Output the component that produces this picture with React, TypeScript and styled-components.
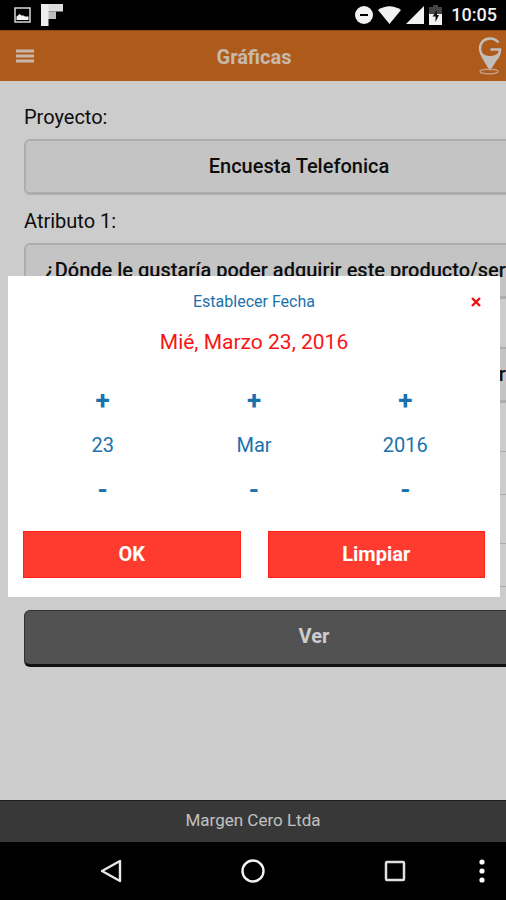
import React, { useState } from 'react';
import styled, { createGlobalStyle } from 'styled-components';

const GlobalStyle = createGlobalStyle`
  *, *::before, *::after { box-sizing: border-box; }
  body { margin: 0; background: #000; }
  body, button, input, select { font-family: Roboto, "Liberation Sans", sans-serif; }
  button { cursor: pointer; }
`;

const Screen = styled.div`
  display: flex;
  flex-direction: column;
  min-height: 100vh;
  background: #000;
  overflow: hidden;
`;

const StatusBar = styled.div`
  display: flex;
  align-items: center;
  justify-content: space-between;
  height: 30px;
  padding: 0 9px 0 14px;
  color: #f0f0f0;
`;

const StatusGroup = styled.div<{ $gap: number }>`
  display: flex;
  align-items: center;
  gap: ${({ $gap }) => $gap}px;
`;

const Clock = styled.time`
  margin-left: 4px;
  font-size: 18px;
  line-height: 30px;
  font-weight: 500;
`;

const AppArea = styled.div`
  position: relative;
  flex: 1;
  display: flex;
  flex-direction: column;
  overflow: hidden;
  background: #fff;
`;

const Header = styled.header`
  display: grid;
  grid-template-columns: 1fr auto 1fr;
  align-items: center;
  height: 51px;
  padding: 0 4px 0 16px;
  border-top: 1px solid #b8580f;
  background: #da7122;
`;

const MenuButton = styled.button`
  justify-self: start;
  display: flex;
  padding: 0;
  border: 0;
  background: none;
`;

const Title = styled.h1`
  margin: 0 10px 0 0;
  padding-top: 2px;
  color: #fbe6d6;
  font-size: 20px;
  line-height: 28px;
  font-weight: 700;
`;

const Logo = styled.div`
  justify-self: end;
  display: flex;
`;

const Content = styled.main`
  flex: 1;
  padding: 10px 0 0 24px;
  overflow: hidden;
`;

const Form = styled.form`
  display: flex;
  flex-direction: column;
  margin-right: -98px;
`;

const Label = styled.label`
  padding-top: 4px;
  color: #111;
  font-size: 20px;
  line-height: 44px;
`;

const Select = styled.select`
  appearance: none;
  height: 56px;
  padding: 0 50px 2px 19px;
  border: 1px solid #d9d9d9;
  border-width: 2px 1px 3px 2px;
  border-radius: 6px;
  background: #f6f6f6;
  color: #111;
  font-size: 20px;
  font-weight: 500;
  text-align: center;
  text-align-last: center;
  text-overflow: ellipsis;
`;

const DateField = styled.input`
  height: 44px;
  padding: 0 12px;
  border: 1px solid #d9d2cc;
  border-radius: 6px;
  background: #fff;
  color: #111;
  font-size: 20px;
`;

const SubmitButton = styled.button`
  height: 57px;
  margin-top: 23px;
  padding: 0 0 3px;
  border: 1px solid #3c3c3c;
  border-bottom: 3px solid #141414;
  border-radius: 6px;
  background: #676767;
  color: #fff;
  font-size: 20px;
  font-weight: 700;
`;

const Footer = styled.footer`
  height: 42px;
  border-top: 1px solid #222;
  background: #464646;
  color: #f0f0f0;
  font-size: 17px;
  line-height: 38px;
  text-align: center;
`;

const Overlay = styled.div`
  position: absolute;
  inset: 0;
  display: flex;
  align-items: center;
  padding: 0 6px 0 8px;
  background: rgba(0, 0, 0, 0.2);
`;

const Dialog = styled.section`
  width: 100%;
  padding: 14px 15px 19px;
  background: #fff;
  color: #1a72ad;
`;

const DialogHeader = styled.div`
  display: grid;
  grid-template-columns: 1fr auto 1fr;
  align-items: center;
`;

const DialogTitle = styled.h2`
  grid-column: 2;
  margin: 0;
  font-size: 16px;
  line-height: 24px;
  font-weight: 400;
`;

const CloseButton = styled.button`
  justify-self: end;
  display: flex;
  margin-right: 4px;
  padding: 0;
  border: 0;
  background: none;
`;

const DateSummary = styled.p`
  margin: 12px 0 20px;
  color: #f81414;
  font-size: 21px;
  line-height: 32px;
  text-align: center;
`;

const Wheels = styled.div`
  display: grid;
  grid-template-columns: repeat(3, 1fr);
  padding: 0 4px;
`;

const Wheel = styled.div`
  display: flex;
  flex-direction: column;
  min-width: 0;
`;

const StepButton = styled.button`
  height: 45px;
  padding: 0;
  border: 0;
  background: none;
  color: #1a72ad;
  font-size: 26px;
  line-height: 45px;
  font-weight: 700;
`;

const WheelValue = styled.input`
  width: 100%;
  height: 45px;
  padding: 0;
  border: 0;
  background: none;
  color: #1a72ad;
  font-size: 20px;
  text-align: center;
`;

const Actions = styled.div`
  display: grid;
  grid-template-columns: 1fr 1fr;
  gap: 27px;
  margin-top: 18px;
`;

const ActionButton = styled.button`
  height: 47px;
  padding: 0;
  border: 1px solid #ff2018;
  background: #ff3b30;
  color: #fff;
  font-size: 20px;
  font-weight: 700;
`;

const SystemNav = styled.nav`
  display: grid;
  grid-template-columns: 40px 1fr 1fr 1fr 40px;
  align-items: center;
  height: 58px;
`;

const NavButton = styled.button`
  display: flex;
  justify-content: center;
  padding: 0;
  border: 0;
  background: none;
`;

const NavMore = styled(NavButton)`
  grid-column: 5;
  padding-right: 8px;
`;

const PictureIcon = () => (
  <svg width="17" height="16" viewBox="0 0 17 16" aria-hidden="true">
    <rect x="1" y="1" width="15" height="14" fill="none" stroke="#d8d8d8" strokeWidth="1.5" />
    <path d="M2.500 13V9.500L4.500 8l1-1 2 1.500h2L11 9.500h3.500V13z" fill="#f4f4f4" />
  </svg>
);

const FlipIcon = () => (
  <svg width="22" height="22" viewBox="0 0 22 22" aria-hidden="true">
    <path d="M0 0h22v7.500H0z" fill="#dcdcdc" />
    <path d="M7 7.500h8V15H7z" fill="#bdbdbd" />
    <path d="M0 0h7.500v22H0z" fill="#eee" />
  </svg>
);

const DoNotDisturbIcon = () => (
  <svg width="18" height="18" viewBox="0 0 18 18" aria-hidden="true">
    <circle cx="9" cy="9" r="9" fill="#f2f2f2" />
    <path d="M5 9h8" stroke="#000" strokeWidth="2" />
  </svg>
);

const WifiIcon = () => (
  <svg width="23" height="18" viewBox="0 0 23 18" aria-hidden="true">
    <path d="M0 4Q11.500-3.500 23 4L11.500 18z" fill="#f2f2f2" />
  </svg>
);

const SignalIcon = () => (
  <svg width="18" height="18" viewBox="0 0 18 18" aria-hidden="true">
    <path d="M18 0v18H0z" fill="#f2f2f2" />
  </svg>
);

const BatteryIcon = () => (
  <svg width="13" height="20" viewBox="0 0 13 20" aria-hidden="true">
    <path d="M4 0h5v2h4v7H0V2h4z" fill="#444" />
    <path d="M0 9h13v11H0z" fill="#f2f2f2" />
    <path d="M8 5 3.500 11.500h3V17L10 10H8z" fill="#111" />
  </svg>
);

const MenuIcon = () => (
  <svg width="18" height="14" viewBox="0 0 18 14" aria-hidden="true">
    <path d="M0 2h18M0 7h18M0 12h18" stroke="#fbe6d6" strokeWidth="3" />
  </svg>
);

const PinLogo = () => (
  <svg width="24" height="38" viewBox="0 0 24 38" role="img" aria-label="G">
    <path
      d="M20.500 5.500C18 2.500 15.500 1.500 12 1.500C6 1.500 2 6 2 11.500C2 15 4 18.500 6 22"
      fill="none"
      stroke="#f2eeec"
      strokeWidth="2.400"
    />
    <path d="M12.500 12.500H22C22 16 21 18.500 18.500 22" fill="none" stroke="#f2eeec" strokeWidth="2.400" />
    <path d="M2 14C6 18.500 9 19 12 19C15.500 19 19 18 22.500 14C21.500 20 17 26 12 34C7 26 3 20 2 14z" fill="#f2eeec" />
    <ellipse cx="11" cy="34.500" rx="9" ry="2.200" fill="none" stroke="#f0c8ae" strokeWidth="1.400" />
  </svg>
);

const CloseIcon = () => (
  <svg width="10" height="10" viewBox="0 0 10 10" aria-hidden="true">
    <path d="M1 1l8 8M9 1L1 9" stroke="#f01010" strokeWidth="2.400" />
  </svg>
);

const BackIcon = () => (
  <svg width="22" height="24" viewBox="0 0 22 24" aria-hidden="true">
    <path d="M20 2v20L2 12z" fill="none" stroke="#e8e8e8" strokeWidth="2.400" strokeLinejoin="round" />
  </svg>
);

const HomeIcon = () => (
  <svg width="24" height="24" viewBox="0 0 24 24" aria-hidden="true">
    <circle cx="12" cy="12" r="10.500" fill="none" stroke="#f4f4f4" strokeWidth="2.400" />
  </svg>
);

const RecentIcon = () => (
  <svg width="22" height="22" viewBox="0 0 22 22" aria-hidden="true">
    <rect x="2" y="2" width="18" height="18" rx="1" fill="none" stroke="#e0e0e0" strokeWidth="2.500" />
  </svg>
);

const MoreIcon = () => (
  <svg width="6" height="24" viewBox="0 0 6 24" aria-hidden="true">
    <circle cx="3" cy="3" r="2.600" fill="#fff" />
    <circle cx="3" cy="12" r="2.600" fill="#fff" />
    <circle cx="3" cy="21" r="2.600" fill="#fff" />
  </svg>
);

const MONTHS = ['Enero', 'Febrero', 'Marzo', 'Abril', 'Mayo', 'Junio', 'Julio', 'Agosto', 'Septiembre', 'Octubre', 'Noviembre', 'Diciembre'];
const DAYS = ['Dom', 'Lun', 'Mar', 'Mié', 'Jue', 'Vie', 'Sáb'];
const QUESTION = '¿Dónde le gustaría poder adquirir este producto/servicio?';

type Unit = 'day' | 'month' | 'year';

const shift = (date: Date, unit: Unit, by: number) => {
  const next = new Date(date);
  if (unit === 'day') next.setDate(next.getDate() + by);
  if (unit === 'month') next.setMonth(next.getMonth() + by);
  if (unit === 'year') next.setFullYear(next.getFullYear() + by);
  return next;
};

export default function App() {
  const [date, setDate] = useState(new Date(2016, 2, 23));
  const [open, setOpen] = useState(true);
  const close = () => setOpen(false);

  const wheels: { unit: Unit; name: string; value: string }[] = [
    { unit: 'day', name: 'Día', value: String(date.getDate()) },
    { unit: 'month', name: 'Mes', value: MONTHS[date.getMonth()].slice(0, 3) },
    { unit: 'year', name: 'Año', value: String(date.getFullYear()) },
  ];

  return (
    <>
      <GlobalStyle />
      <Screen>
        <StatusBar>
          <StatusGroup $gap={10}>
            <PictureIcon />
            <FlipIcon />
          </StatusGroup>
          <StatusGroup $gap={5}>
            <DoNotDisturbIcon />
            <WifiIcon />
            <SignalIcon />
            <BatteryIcon />
            <Clock>10:05</Clock>
          </StatusGroup>
        </StatusBar>

        <AppArea>
          <Header>
            <MenuButton type="button" aria-label="Menú"><MenuIcon /></MenuButton>
            <Title>Gráficas</Title>
            <Logo><PinLogo /></Logo>
          </Header>

          <Content>
            <Form onSubmit={(e) => e.preventDefault()}>
              <Label htmlFor="project">Proyecto:</Label>
              <Select id="project"><option>Encuesta Telefonica</option></Select>
              <Label htmlFor="attribute1">Atributo 1:</Label>
              <Select id="attribute1"><option>{QUESTION}</option></Select>
              <Label htmlFor="attribute2">Atributo 2:</Label>
              <Select id="attribute2"><option>{QUESTION}</option></Select>
              <Label htmlFor="from">Desde:</Label>
              <DateField id="from" readOnly onClick={() => setOpen(true)} />
              <Label htmlFor="to">Hasta:</Label>
              <DateField id="to" readOnly onClick={() => setOpen(true)} />
              <SubmitButton>Ver</SubmitButton>
            </Form>
          </Content>

          <Footer>Margen Cero Ltda</Footer>

          {open && (
            <Overlay>
              <Dialog role="dialog" aria-labelledby="dialog-title">
                <DialogHeader>
                  <DialogTitle id="dialog-title">Establecer Fecha</DialogTitle>
                  <CloseButton type="button" aria-label="Cerrar" onClick={close}><CloseIcon /></CloseButton>
                </DialogHeader>
                <DateSummary>
                  {`${DAYS[date.getDay()]}, ${MONTHS[date.getMonth()]} ${date.getDate()}, ${date.getFullYear()}`}
                </DateSummary>
                <Wheels>
                  {wheels.map(({ unit, name, value }) => (
                    <Wheel key={unit}>
                      <StepButton type="button" onClick={() => setDate(shift(date, unit, 1))}>+</StepButton>
                      <WheelValue aria-label={name} value={value} readOnly />
                      <StepButton type="button" onClick={() => setDate(shift(date, unit, -1))}>-</StepButton>
                    </Wheel>
                  ))}
                </Wheels>
                <Actions>
                  <ActionButton type="button" onClick={close}>OK</ActionButton>
                  <ActionButton type="button" onClick={close}>Limpiar</ActionButton>
                </Actions>
              </Dialog>
            </Overlay>
          )}
        </AppArea>

        <SystemNav>
          <span />
          <NavButton type="button" aria-label="Atrás"><BackIcon /></NavButton>
          <NavButton type="button" aria-label="Inicio"><HomeIcon /></NavButton>
          <NavButton type="button" aria-label="Recientes"><RecentIcon /></NavButton>
          <NavMore type="button" aria-label="Más opciones"><MoreIcon /></NavMore>
        </SystemNav>
      </Screen>
    </>
  );
}
